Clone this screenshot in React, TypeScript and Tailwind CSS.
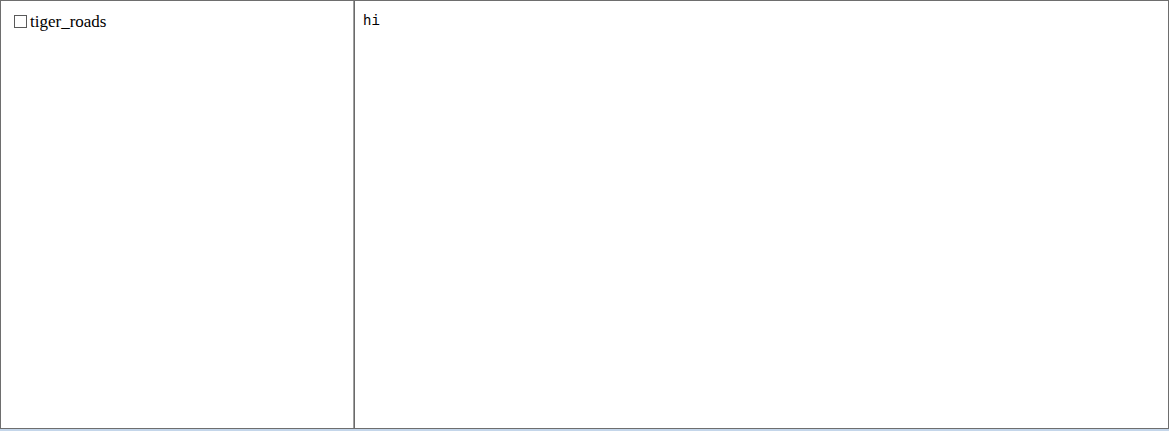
export default function App() {
  return (
    <div className="w-[1169px] h-[431px] flex flex-col bg-white">
      <div className="flex-1 flex border-t border-l border-r border-b border-[#6e6e6e] min-h-0">
        <div className="w-[352px] pl-[13px] pt-[11px] flex items-start font-['Liberation_Serif',serif] text-[17px] leading-[20px] text-black">
          <span className="mt-[3px] w-[13px] h-[13px] border border-[#5a5a5a] bg-white mr-[3px] shrink-0" />
          <span>tiger_roads</span>
        </div>
        <div className="w-[2px] bg-[#6a6a6a] border-l border-[#a0a0a0]" />
        <div className="flex-1 pl-[8px] pt-[11px] font-['Liberation_Mono',monospace] text-[14px] leading-[18px] text-black">
          hi
        </div>
      </div>
      <div className="h-[2px] bg-[#c4d6ea]" />
    </div>
  );
}
